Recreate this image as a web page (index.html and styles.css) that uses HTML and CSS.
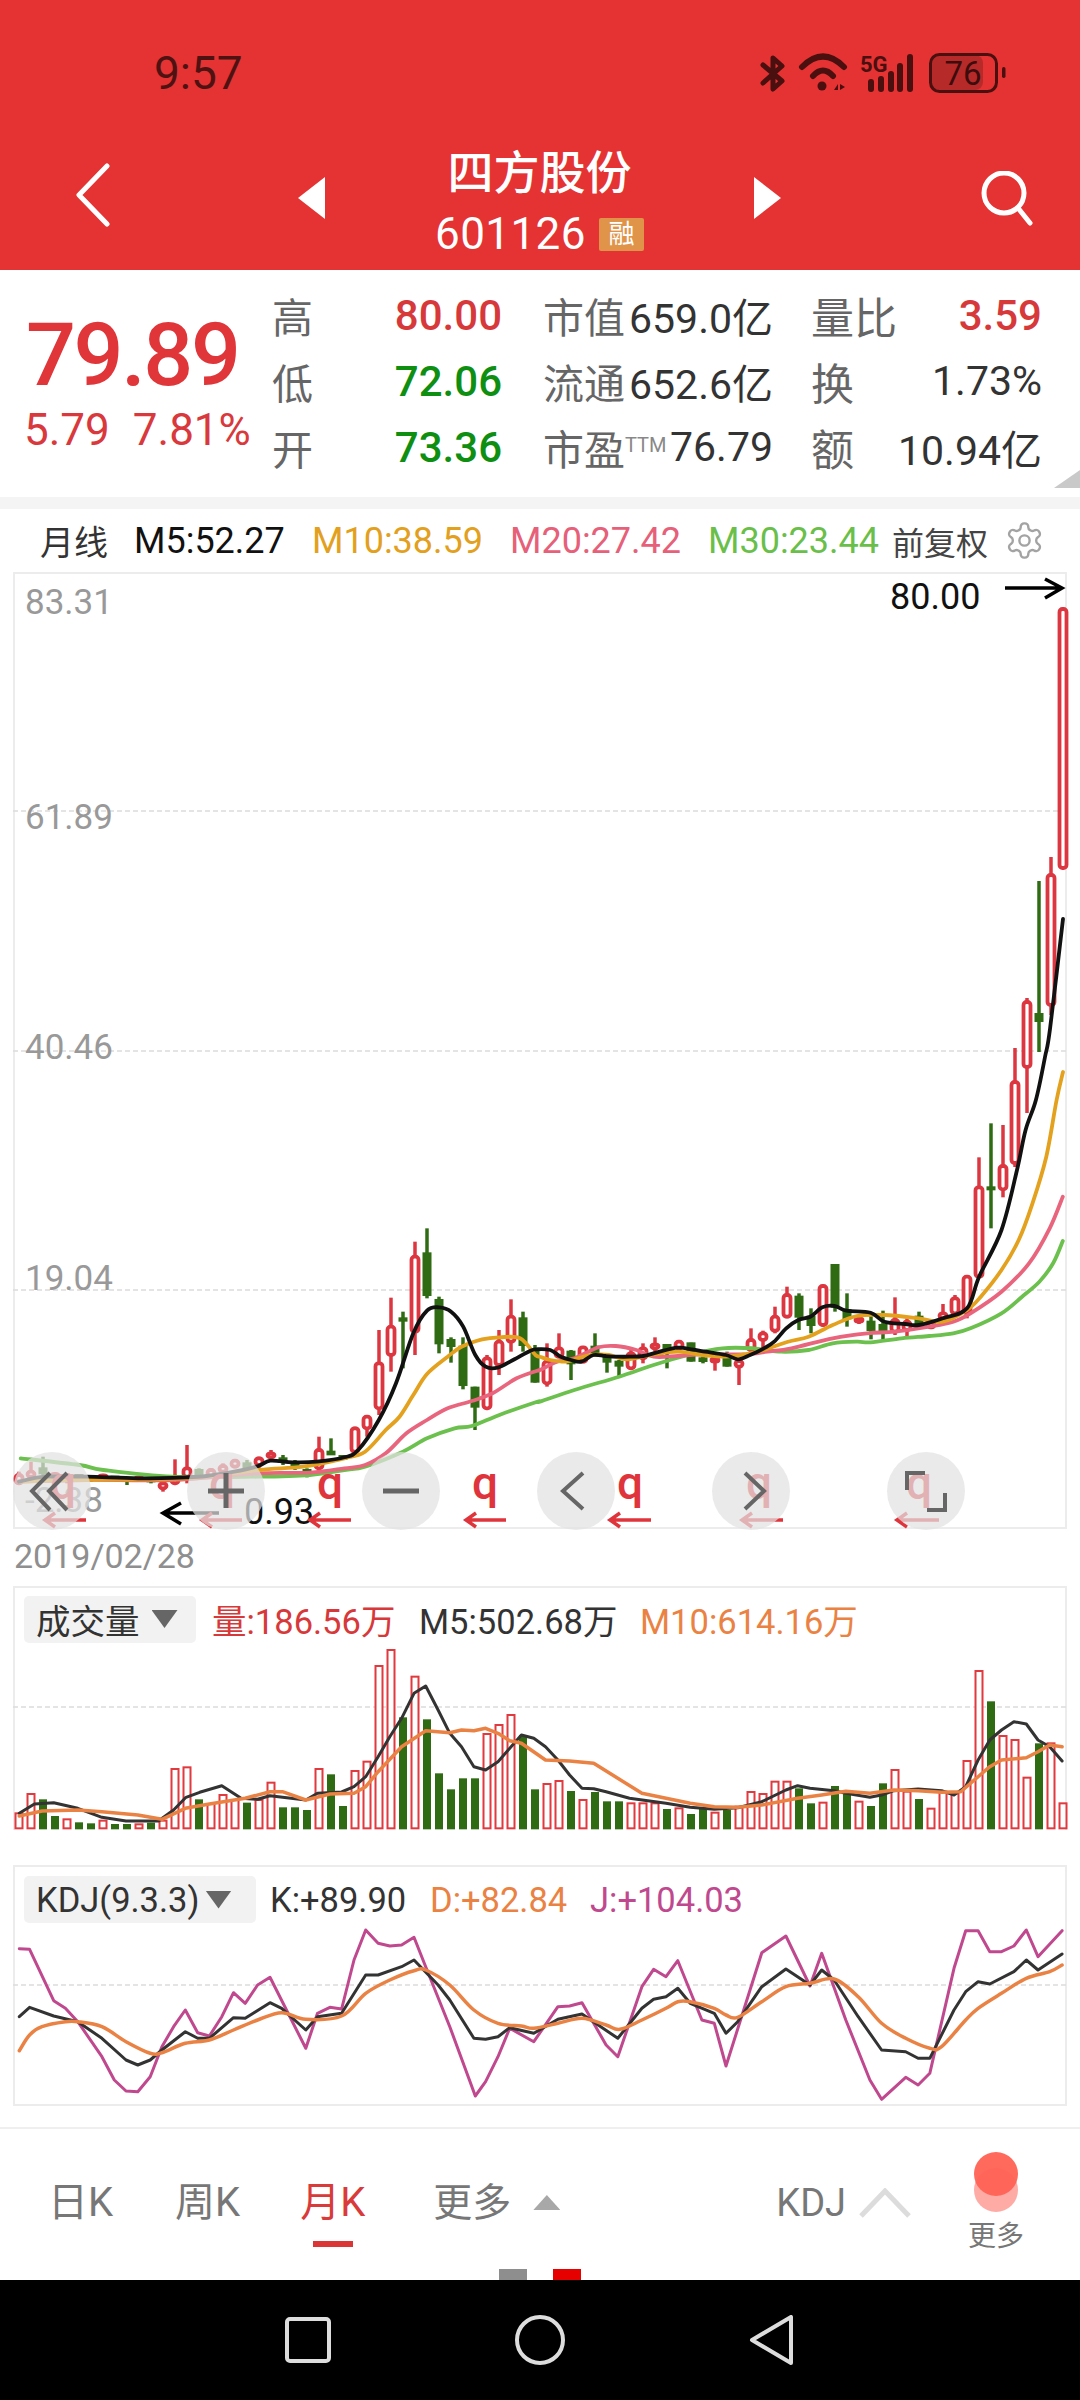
FILE: index.html
```html
<!DOCTYPE html>
<html lang="zh">
<head>
<meta charset="utf-8">
<title>四方股份 601126</title>
<link rel="stylesheet" href="styles.css">
</head>
<body>
<div class="app">
  <header class="topbar">
    <div class="status">
      <span class="time">9:57</span>
      <svg class="status-icons" viewBox="755 50 255 46" width="255" height="46">
        <path class="si-line" d="M763 65 L782 81 L773 89 V58 L782 66 L763 83"/>
        <path class="si-wifi" d="M802 67 Q823 46 844 67 M813 76 Q823 65 833 76"/>
        <circle class="si-fill" cx="822" cy="86" r="4.5"/>
        <path class="si-fill" d="M834 90l4-6v6zM840 84l5 3-5 3z"/>
        <text class="si-5g" x="860" y="72">5G</text>
        <path class="si-bars" d="M871 82v7M881 79v10M891 74v15M900 66v23M910 57v32"/>
        <rect class="si-batfill" x="931" y="55" width="52" height="35" rx="8"/>
        <rect class="si-bat" x="930.5" y="54.5" width="66" height="37" rx="9"/>
        <rect class="si-fill" x="1002" y="67" width="3.5" height="11" rx="1.7"/>
        <text class="si-76" x="963" y="85">76</text>
      </svg>
    </div>
    <nav class="navrow">
      <svg class="ic-back" viewBox="0 0 36 64" width="36" height="64"><path d="M32 3 L4 32 L32 61"/></svg>
      <svg class="ic-prev" viewBox="0 0 27 42" width="27" height="42"><path d="M27 0V42L0 21Z"/></svg>
      <div class="title">
        <div class="title-name">四方股份</div>
        <div class="title-code">601126<span class="badge">融</span></div>
      </div>
      <svg class="ic-next" viewBox="0 0 27 42" width="27" height="42"><path d="M0 0V42L27 21Z"/></svg>
      <svg class="ic-search" viewBox="0 0 54 56" width="54" height="56"><circle cx="25" cy="22" r="20"/><path d="M39 37 L51 52"/></svg>
    </nav>
  </header>

  <section class="stats">
    <div class="price">
      <div class="price-main">79.89</div>
      <div class="price-sub"><span>5.79</span><span>7.81%</span></div>
    </div>
    <div class="cell"><span class="lab">高</span><span class="val up">80.00</span></div>
    <div class="cell cell-b"><span class="lab">市值</span><span class="val">659.0亿</span></div>
    <div class="cell cell-c"><span class="lab">量比</span><span class="val up">3.59</span></div>
    <div class="cell"><span class="lab">低</span><span class="val down">72.06</span></div>
    <div class="cell cell-b"><span class="lab">流通</span><span class="val">652.6亿</span></div>
    <div class="cell cell-c"><span class="lab">换</span><span class="val">1.73%</span></div>
    <div class="cell"><span class="lab">开</span><span class="val down">73.36</span></div>
    <div class="cell cell-b"><span class="lab">市盈<sup class="ttm">TTM</sup></span><span class="val">76.79</span></div>
    <div class="cell cell-c"><span class="lab">额</span><span class="val">10.94亿</span></div>
    <span class="corner"></span>
  </section>
  <div class="strip"></div>

  <div class="legend">
    <span class="lg-title">月线</span>
    <span class="lg-m5">M5:52.27</span>
    <span class="lg-m10">M10:38.59</span>
    <span class="lg-m20">M20:27.42</span>
    <span class="lg-m30">M30:23.44</span>
    <span class="lg-adj">前复权</span>
    <svg class="gear" viewBox="0 0 24 24" width="41" height="41"><path d="M12.22 2h-.44a2 2 0 0 0-2 2v.18a2 2 0 0 1-1 1.73l-.43.25a2 2 0 0 1-2 0l-.15-.08a2 2 0 0 0-2.73.73l-.22.38a2 2 0 0 0 .73 2.73l.15.1a2 2 0 0 1 1 1.72v.51a2 2 0 0 1-1 1.74l-.15.09a2 2 0 0 0-.73 2.73l.22.38a2 2 0 0 0 2.73.73l.15-.08a2 2 0 0 1 2 0l.43.25a2 2 0 0 1 1 1.73V20a2 2 0 0 0 2 2h.44a2 2 0 0 0 2-2v-.18a2 2 0 0 1 1-1.73l.43-.25a2 2 0 0 1 2 0l.15.08a2 2 0 0 0 2.73-.73l.22-.39a2 2 0 0 0-.73-2.73l-.15-.08a2 2 0 0 1-1-1.74v-.5a2 2 0 0 1 1-1.74l.15-.09a2 2 0 0 0 .73-2.73l-.22-.38a2 2 0 0 0-2.73-.73l-.15.08a2 2 0 0 1-2 0l-.43-.25a2 2 0 0 1-1-1.73V4a2 2 0 0 0-2-2z"/><circle cx="12" cy="12" r="3"/></svg>
  </div>

  <div class="pane pane-main">
    <svg class="plot" viewBox="13 572 1054 957">
      <path class="grid" d="M13 811H1067M13 1051H1067M13 1290H1067"/>
      <text class="axis" x="25" y="614">83.31</text>
      <text class="axis" x="25" y="829">61.89</text>
      <text class="axis" x="25" y="1059">40.46</text>
      <text class="axis" x="25" y="1290">19.04</text>
      <text class="axis" x="25" y="1512">-2.38</text>
      <text class="mark" x="890" y="609">80.00</text>
      <path class="mark-arrow" d="M1005 588H1062M1045 579L1062 588L1045 598"/>
      <g id="candles"></g>
      <g id="mas"></g>
      <text class="mark" x="244" y="1524">0.93</text>
      <path class="mark-arrow" d="M219 1513H163M181 1503L163 1513L181 1524"/>
      <text class="q" x="63" y="1499">q</text>
      <text class="q" x="222" y="1499">q</text>
      <text class="q" x="330" y="1499">q</text>
      <text class="q" x="485" y="1499">q</text>
      <text class="q" x="630" y="1499">q</text>
      <text class="q" x="759" y="1499">q</text>
      <text class="q" x="919" y="1499">q</text>
      <path class="q-arrow" d="M45 1520H86M55 1513L45 1520L55 1527M202 1520H242M212 1513L202 1520L212 1527M310 1520H351M320 1513L310 1520L320 1527M466 1520H506M476 1513L466 1520L476 1527M610 1520H651M620 1513L610 1520L620 1527M742 1520H783M752 1513L742 1520L752 1527M897 1520H939M907 1513L897 1520L907 1527"/>
      <circle class="fab" cx="52" cy="1491" r="39"/>
      <circle class="fab" cx="226" cy="1491" r="39"/>
      <circle class="fab" cx="401" cy="1491" r="39"/>
      <circle class="fab" cx="576" cy="1491" r="39"/>
      <circle class="fab" cx="751" cy="1491" r="39"/>
      <circle class="fab" cx="926" cy="1491" r="39"/>
      <path class="fab-ic" d="M50 1473L32 1491L50 1510M67 1473L49 1491L67 1510"/>
      <path class="fab-ic thick" d="M208 1491H244M226 1473V1508"/>
      <path class="fab-ic thick" d="M383 1491H419"/>
      <path class="fab-ic" d="M583 1473L563 1491L583 1509"/>
      <path class="fab-ic" d="M745 1473L764 1491L745 1509"/>
      <path class="fab-ic" d="M907 1490V1473H925M945 1493V1510H927"/>
    </svg>
  </div>
  <div class="date">2019/02/28</div>

  <div class="pane pane-vol">
    <svg class="plot" viewBox="13 1586 1054 244">
      <path class="grid" d="M13 1707H1067"/>
      <g id="vols"></g>
      <g id="vol-lines"></g>
    </svg>
    <div class="pane-head">
      <div class="pill pill-vol"><span>成交量</span><i class="pill-tri"></i></div>
      <span class="hd-red">量:186.56万</span>
      <span class="hd-dark">M5:502.68万</span>
      <span class="hd-orange">M10:614.16万</span>
    </div>
  </div>

  <div class="pane pane-kdj">
    <svg class="plot" viewBox="13 1865 1054 241">
      <path class="grid" d="M13 1985H1067"/>
      <g id="kdj-lines"></g>
    </svg>
    <div class="pane-head">
      <div class="pill pill-kdj"><span>KDJ(9.3.3)</span><i class="pill-tri"></i></div>
      <span class="hd-dark">K:+89.90</span>
      <span class="hd-orange">D:+82.84</span>
      <span class="hd-magenta">J:+104.03</span>
    </div>
  </div>

  <div class="tabs">
    <span class="tab tab-d">日K</span>
    <span class="tab tab-w">周K</span>
    <span class="tab tab-m active">月K</span>
    <span class="tab tab-more">更多</span>
    <i class="tab-tri"></i>
    <span class="tab tab-kdj">KDJ</span>
    <svg class="tab-chev" viewBox="0 0 52 30" width="52" height="30"><path d="M2 28L26 3L50 28"/></svg>
    <div class="orb">
      <span class="orb-dots"></span>
      <span class="orb-label">更多</span>
    </div>
    <span class="page-dots"><i class="pd-gray"></i><i class="pd-red"></i></span>
  </div>

  <footer class="sysnav">
    <svg viewBox="0 0 46 46" width="46" height="46"><rect class="nav-ic" x="2" y="2" width="42" height="42" rx="3"/></svg>
    <svg viewBox="0 0 50 50" width="50" height="50"><circle class="nav-ic" cx="25" cy="25" r="23"/></svg>
    <svg viewBox="0 0 44 50" width="44" height="50"><path class="nav-ic" d="M42 2V48L3 25Z"/></svg>
  </footer>
</div>
<script src="script.js"></script>
</body>
</html>
```
FILE: styles.css
```css
* { box-sizing: border-box; }
html, body { margin: 0; padding: 0; background: #fff; }
body { font-family: Roboto, "Noto Sans CJK SC", sans-serif; }
.app { width: 1080px; height: 2400px; overflow: hidden; display: flex; flex-direction: column; background: #fff; }

/* top bar */
.topbar { height: 270px; background: #e53232; display: flex; flex-direction: column; }
.status { height: 146px; display: flex; align-items: center; justify-content: space-between; padding: 0 70px 0 154px; }
.time { font-size: 46px; color: #4f1212; line-height: 1; }
.si-line { fill: none; stroke: #4a0f0f; stroke-width: 5; stroke-linejoin: round; stroke-linecap: round; }
.si-wifi { fill: none; stroke: #4a0f0f; stroke-width: 6; stroke-linecap: round; }
.si-fill { fill: #4a0f0f; }
.si-bars { fill: none; stroke: #4a0f0f; stroke-width: 6; stroke-linecap: round; }
.si-5g { font: 700 22px Roboto, sans-serif; fill: #4a0f0f; }
.si-bat { fill: none; stroke: #4a0f0f; stroke-width: 3; }
.si-batfill { fill: #b72a2a; }
.si-76 { font: 400 33px Roboto, sans-serif; fill: #3d0c0c; text-anchor: middle; }

.navrow { flex: 1; display: flex; align-items: flex-start; padding-left: 75px; }
.ic-back { margin-top: 17px; fill: none; stroke: #fff; stroke-width: 5; stroke-linecap: round; stroke-linejoin: round; }
.ic-prev { margin: 31px 0 0 187px; fill: #fff; }
.ic-next { margin-top: 31px; fill: #fff; }
.title { width: 429px; padding-top: 1px; display: flex; flex-direction: column; align-items: center; color: #fff; }
.title-name { font-size: 46px; line-height: 52px; font-weight: 500; }
.title-code { display: flex; align-items: center; gap: 13px; margin-top: 13px; font-size: 44px; line-height: 44px; letter-spacing: .4px; }
.badge { width: 45px; height: 33px; background: #e0944a; border-radius: 2px; font-size: 26px; line-height: 33px; text-align: center; letter-spacing: 0; }
.ic-search { margin: 25px 0 0 198px; fill: none; stroke: #fff; stroke-width: 5; stroke-linecap: round; }

/* quote */
.stats { position: relative; height: 227px; padding-top: 12px; display: grid; grid-template-columns: 272px 230px 271px 269px; grid-auto-rows: 66px; }
.cell-b { padding-left: 41px; }
.cell-c { padding-left: 38px; }
.price { grid-row: 1 / span 3; padding: 26px 0 0 24px; }
.price-main { font-size: 88px; line-height: 90px; font-weight: 500; color: #e03539; letter-spacing: -2.4px; margin-left: 2px; margin-top: 2px; }
.price-sub { display: flex; gap: 23px; font-size: 44px; line-height: 44px; color: #d9393c; margin-top: 8px; }
.cell { display: flex; justify-content: space-between; align-items: center; }
.lab { font-size: 41px; color: #666; white-space: nowrap; }
.cell-c .lab { font-size: 43px; }
.val { font-size: 41px; color: #333; white-space: nowrap; }
.val.up, .val.down { font-size: 42px; font-weight: 500; }
.val.up { color: #d7393b; }
.val.down { color: #0e8f12; }
.ttm { font-size: 20px; vertical-align: 13px; line-height: 0; color: #888; }
.corner { position: absolute; right: 0; bottom: 9px; width: 26px; height: 18px; background: #c9c9c9; clip-path: polygon(100% 0, 100% 100%, 0 100%); }
.strip { height: 12px; background: #f4f4f4; }

/* legend */
.legend { height: 63px; display: grid; grid-template-columns: 94px 178px 198px 198px 184px 112px 41px; align-items: center; padding-left: 40px; font-size: 36px; white-space: nowrap; }
.lg-title { font-size: 34px; color: #333; }
.lg-m5 { color: #111; }
.lg-m10 { color: #e2a01e; }
.lg-m20 { color: #e6607a; }
.lg-m30 { color: #6abf4b; }
.lg-adj { font-size: 32px; color: #444; }
.gear { fill: none; stroke: #a3a3a3; stroke-width: 1.4; }

/* charts */
.pane { position: relative; margin: 0 13px; width: 1054px; border: 2px solid #ececec; }
.pane-main { height: 957px; }
.pane-vol { height: 244px; border-bottom: 0; }
.pane-kdj { height: 241px; margin-top: 35px; }
.plot { position: absolute; left: -2px; top: -2px; width: 1054px; overflow: visible; }
.pane-main .plot { height: 957px; }
.pane-vol .plot { height: 244px; }
.pane-kdj .plot { height: 241px; }
.grid { fill: none; stroke: #dcdcdc; stroke-width: 1.5; stroke-dasharray: 5 3; }
.axis { font: 400 35px Roboto, sans-serif; fill: #999; }
.mark { font: 400 36px Roboto, sans-serif; fill: #111; }
.mark-arrow { fill: none; stroke: #000; stroke-width: 3.5; }
.q { font: 500 46px Roboto, sans-serif; fill: #e0343c; text-anchor: middle; }
.q-arrow { fill: none; stroke: #e0343c; stroke-width: 3.5; }
.fab { fill: rgba(226,226,226,.72); }
.fab-ic { fill: none; stroke: #666; stroke-width: 4; }
.fab-ic.thick { stroke-width: 5; }
.date { height: 57px; line-height: 54px; padding-left: 14px; font-size: 34px; color: #8f8f8f; }

.wick-r { stroke: #dc3640; stroke-width: 3.5; }
.wick-g { stroke: #2f6b12; stroke-width: 3.5; }
.body-r { fill: #fff; stroke: #dc3640; stroke-width: 3.8; }
.body-g { fill: #2f6b12; stroke: #2f6b12; stroke-width: 2; }
.line { fill: none; stroke-linejoin: round; stroke-linecap: round; }
.ma5 { stroke: #111; stroke-width: 3.8; }
.ma10 { stroke: #e3a11d; stroke-width: 3.8; }
.ma20 { stroke: #e8657d; stroke-width: 3.8; }
.ma30 { stroke: #6cc04e; stroke-width: 3.8; }
.vbar-r { fill: #fff; stroke: #e0393e; stroke-width: 2; }
.vbar-g { fill: #2f6b12; }
.v5 { stroke: #333; stroke-width: 3; }
.v10 { stroke: #ea8244; stroke-width: 3.5; }
.kk { stroke: #333; stroke-width: 3; }
.kd { stroke: #ea8244; stroke-width: 3.5; }
.kj { stroke: #c0488e; stroke-width: 3; }

.pane-head { position: relative; display: flex; align-items: center; padding: 8px 0 0 9px; font-size: 34.5px; white-space: nowrap; }
.pane-vol .pane-head { padding-top: 6px; }
.pane-kdj .pane-head { padding-top: 9px; }
.pill { height: 47px; display: flex; align-items: center; background: #f2f2f2; border-radius: 5px; padding-left: 12px; color: #333; }
.pill-vol { width: 172px; gap: 12px; margin-right: 16px; }
.pill-kdj { width: 232px; gap: 6px; margin-right: 14px; }
.pill-tri { width: 26px; height: 18px; background: #666; clip-path: polygon(0 0, 100% 0, 50% 100%); }
.pane-vol .hd-red { width: 207px; }
.pane-vol .hd-dark { width: 221px; }
.pane-kdj .hd-dark { width: 160px; }
.pane-kdj .hd-orange { width: 160px; }
.hd-red { color: #d7393b; }
.hd-dark { color: #333; }
.hd-orange { color: #ea8244; }
.hd-magenta { color: #c0488e; }

/* tabs */
.tabs { position: relative; height: 153px; margin-top: 21px; border-top: 2px solid #efefef; display: flex; align-items: flex-start; padding: 48px 0 0 48px; }
.tab { font-size: 40px; line-height: 52px; color: #777; white-space: nowrap; }
.tab-w { margin-left: 62px; }
.tab-m { margin-left: 60px; color: #d93a3a; position: relative; }
.tab-m::after { content: ""; position: absolute; left: 13px; top: 64px; width: 40px; height: 6px; background: #db3535; }
.tab-more { margin-left: 68px; font-size: 39px; }
.tab-tri { margin: 18px 0 0 22px; width: 27px; height: 15px; background: #a8a8a8; clip-path: polygon(50% 0, 100% 100%, 0 100%); }
.tab-kdj { margin-left: 216px; font-size: 38px; }
.tab-chev { margin: 11px 0 0 13px; fill: none; stroke: #dcdcdc; stroke-width: 5; }
.orb { position: absolute; left: 960px; top: 23px; width: 72px; display: flex; flex-direction: column; align-items: center; }
.orb-dots { position: relative; width: 44px; height: 60px; }
.orb-dots::before, .orb-dots::after { content: ""; position: absolute; left: 0; width: 44px; height: 44px; border-radius: 50%; }
.orb-dots::after { top: 0; background: rgba(255,98,84,.95); }
.orb-dots::before { top: 16px; background: #ffaba5; }
.orb-label { font-size: 28px; line-height: 34px; color: #777; margin-top: 8px; }
.page-dots { position: absolute; left: 499px; bottom: 0; display: flex; gap: 26px; }
.page-dots i { display: block; width: 28px; height: 11px; }
.pd-gray { background: #8e8e8e; }
.pd-red { background: #e60000; }

/* system nav */
.sysnav { height: 120px; background: #000; display: flex; align-items: center; justify-content: center; gap: 184px; padding-right: 3px; }
.nav-ic { fill: none; stroke: #ddd; stroke-width: 4; stroke-linejoin: round; }
```
FILE: script.js
```js
// Reference-sampled chart data. X runs on a 12px slot grid; Y values are sampled
// in 3x units from a base line, so each block says which base it belongs to.
var NS = 'http://www.w3.org/2000/svg';
function el(parent, tag, cls, attrs) {
  var n = document.createElementNS(NS, tag);
  n.setAttribute('class', cls);
  for (var k in attrs) n.setAttribute(k, attrs[k]);
  parent.appendChild(n);
  return n;
}
function slot(i) { return 19 + 12 * i; }

// [colour, wickTop, wickBottom, bodyTop, bodyBottom]
var c1 = 'r755,795,765,790 r725,775,755,770 g710,765,745,760 r760,785,762,772 r760,790,765,780 g762,778,765,775 g765,785,768,775 r763,775,766,772 g768,780,770,776 g772,795,775,782 r770,782,772,778 g772,790,776,784 r785,815,790,805 r718,790,770,790 r675,790,745,770 g745,770,750,765 r745,770,750,768 r730,760,738,755 r718,745,722,740 g720,750,730,745 r710,750,715,735 r690,715,700,712 g705,735,715,725 g720,750,735,742 g745,772,750,760 r650,750,690,745 g655,705,695,703 g705,720,708,716 r620,700,625,695 r585,650,590,625 r330,585,430,565 r233,455,320,405 g275,445,295,302 r65,405,110,335 g25,235,100,225 g230,400,240,370 g352,428,360,378 g352,508,380,495 g500,630,503,560 r405,568,415,565 r330,465,365,435 r238,395,290,365 g275,395,295,375 g375,488,395,485';
var c2 = 'r730,860,785,850 r700,775,745,770 g750,840,755,790 r740,790,742,785 g700,770,740,765 g770,818,770,785 g780,830,785,797 r750,805,760,805 r730,790,745,775 r712,755,733,745 g733,805,735,755 r722,755,725,745 g728,785,730,782 g770,790,775,783 r770,812,775,785 g755,800,775,797 r780,855,783,800 r685,760,720,750 r692,750,700,720 r620,700,650,692 r560,655,585,650 g580,690,590,650 g625,700,650,675 r555,680,558,675 g495,635,495,620 g580,680,630,655 r645,672,655,665 g640,718,665,690 g632,718,675,690 r592,705,660,695 r655,715,665,690 g635,680,650,670 r665,685,668,682 r612,655,640,655 r585,645,595,640 r525,655,530,640 r172,530,262,530 g70,385,262,268 r75,292,198,268';
var c3 = [['r',1048,1167,1082,1163],['r',998,1113,1002,1067],['g',881,1052,1014,1021],['r',857,1015,875,1005],['r',609,868,609,868]];

function parseC(s, base) {
  return s.split(' ').map(function (t) {
    var v = t.slice(1).split(',').map(function (x) { return base + Number(x) / 3; });
    return [t[0], v[0], v[1], v[2], v[3]];
  });
}
var candles = parseC(c1, 1220).concat(parseC(c2, 1100), c3);
var gc = document.getElementById('candles');
candles.forEach(function (c, i) {
  var x = slot(i);
  el(gc, 'line', 'wick-' + c[0], { x1: x, x2: x, y1: c[1], y2: c[2] });
  el(gc, 'rect', 'body-' + c[0], {
    x: x - 3.5, y: c[3], width: 7, height: Math.max(c[4] - c[3], 2), rx: c[0] === 'r' ? 3 : 0
  });
});

function path(pts, smooth) {
  var d = 'M' + pts[0][0].toFixed(1) + ' ' + pts[0][1].toFixed(1);
  for (var i = 1; i < pts.length; i++) {
    if (!smooth) { d += 'L' + pts[i][0].toFixed(1) + ' ' + pts[i][1].toFixed(1); continue; }
    var p0 = pts[Math.max(i - 2, 0)], p1 = pts[i - 1], p2 = pts[i], p3 = pts[Math.min(i + 1, pts.length - 1)];
    d += 'C' + (p1[0] + (p2[0] - p0[0]) / 6).toFixed(1) + ' ' + (p1[1] + (p2[1] - p0[1]) / 6).toFixed(1) + ' ' +
      (p2[0] - (p3[0] - p1[0]) / 6).toFixed(1) + ' ' + (p2[1] - (p3[1] - p1[1]) / 6).toFixed(1) + ' ' +
      p2[0].toFixed(1) + ' ' + p2[1].toFixed(1);
  }
  return d;
}
function nums(s) { return s.trim().split(/\s+/).map(function (t) { return t.split(',').map(Number); }); }
// a = samples on base 1220, b = samples on base 1100 (x offset 540), c = page coordinates
function mainLine(a, b, c) {
  var k = 1568 / 540;
  return nums(a).map(function (p) { return [p[0] / k, 1220 + p[1] / 3]; })
    .concat(nums(b).map(function (p) { return [540 + p[0] / k, 1100 + p[1] / 3]; }))
    .concat(c ? nums(c) : []);
}
var gm = document.getElementById('mas');
el(gm, 'path', 'line ma30', { d: path(mainLine(
  '60,715 230,735 300,750 500,770 750,770 900,765 1000,750 1060,740 1170,695 1240,655 1320,625 1370,618 1450,585 1560,545',
  '0,905 100,870 230,830 330,795 430,765 530,745 620,745 700,755 780,750 850,730 920,725 960,727 1050,715 1130,708 1200,700 1250,685 1340,640 1400,590 1450,545 1490,490 1518,423'), true) });
el(gm, 'path', 'line ma20', { d: path(mainLine(
  '55,785 250,780 500,780 750,760 900,758 1000,745 1060,735 1120,700 1180,640 1240,600 1300,565 1370,543 1430,520 1500,475 1560,452',
  '0,810 50,785 100,775 170,742 220,738 280,750 330,770 400,768 470,763 530,763 600,763 660,755 730,745 850,715 950,700 1030,695 1130,680 1200,665 1250,640 1340,575 1420,490 1480,385 1518,290'), true) });
el(gm, 'path', 'line ma10', { d: path(mainLine(
  '55,785 200,780 540,775 750,750 880,740 1000,715 1060,695 1120,630 1160,590 1200,525 1240,462 1300,410 1340,380 1400,358 1450,352 1510,355 1555,405',
  '0,770 30,780 75,785 110,775 150,765 200,765 250,778 320,765 400,755 470,765 540,770 600,762 650,750 720,725 780,710 850,675 920,648 1000,645 1100,655 1170,665 1240,630 1280,590 1340,510 1390,420 1430,310 1470,170 1500,0',
  '1063,1072'), true) });
el(gm, 'path', 'line ma5', { d: path(mainLine(
  '55,785 130,770 250,770 400,775 540,772 600,768 680,755 750,738 785,722 850,727 920,725 1000,712 1040,690 1100,600 1150,490 1200,340 1240,272 1275,262 1310,275 1345,320 1380,405 1410,440 1445,443 1490,420 1540,392',
  '-10,748 30,750 60,770 90,780 120,785 155,765 190,768 225,770 260,770 300,768 340,757 400,743 440,748 480,755 540,765 575,778 610,765 650,745 680,725 715,685 750,660 785,650 820,622 855,618 890,632 960,638 1000,665 1060,672 1100,675 1170,655 1240,625 1275,530 1340,390 1385,210 1410,90 1440,0',
  '1045,1057 1050,1029 1063,919'), true) });

// volume: bar tops sampled in 3x from y=1580
var k4 = 1568 / 1080;
var vols = 'r700 r642 g658 g708 r718 g727 g730 r722 g732 g732 r733 g728 r722 r567 r562 g658 r672 r645 r660 g668 r660 r608 g682 g682 g690 r567 g583 g678 r573 r545 r258 r210 g412 r290 g418 g580 g628 g595 g595 r462 r435 r405 g465 g628 r612 r603 g633 r660 g636 g664 g664 r670 r670 r670 g687 r685 g702 g685 r698 g690 r680 r636 r642 r605 r605 g625 g670 r668 g618 g640 r665 g678 g610 r570 r635 g657 r686 r635 r640 r543 r273 g364 r468 r480 r593 g490 r490 r670';
var gv = document.getElementById('vols');
var volBase = 1580 + 745 / 3;
vols.split(' ').forEach(function (t, i) {
  var top = 1580 + Number(t.slice(1)) / 3, x = slot(i);
  el(gv, 'rect', 'vbar-' + t[0], t[0] === 'r'
    ? { x: x - 3.5, y: top, width: 7, height: volBase - top }
    : { x: x - 4, y: top, width: 8, height: volBase - top + 1 });
});
function paneLine(s) { return nums(s).map(function (p) { return [p[0] / k4, 1580 + p[1] / 3]; }); }
var gl = document.getElementById('vol-lines');
el(gl, 'path', 'line v5', { d: path(paneLine('28,700 50,672 78,668 113,685 148,712 183,723 230,723 252,690 270,652 290,637 322,617 350,655 374,658 392,647 444,660 461,640 496,636 514,620 531,590 549,530 566,470 583,415 601,340 618,318 636,390 653,460 670,500 688,560 705,570 723,545 757,465 775,475 792,500 810,540 827,585 845,625 862,626 880,635 914,655 967,670 1002,682 1037,688 1071,683 1106,665 1141,630 1158,617 1176,625 1211,632 1228,640 1263,652 1280,645 1298,632 1333,627 1367,632 1385,645 1402,620 1420,540 1437,480 1454,450 1472,425 1490,432 1507,480 1524,500 1542,543')) });
el(gl, 'path', 'line v10', { d: path(paneLine('28,708 61,693 113,690 148,695 200,705 235,718 269,685 304,672 356,655 392,635 410,635 444,660 479,642 514,640 531,620 549,575 583,500 618,452 653,458 670,450 688,452 705,445 723,460 740,482 757,490 792,540 827,543 862,550 897,595 932,640 967,655 1002,670 1037,680 1071,682 1106,675 1158,655 1193,645 1228,634 1263,640 1298,630 1333,632 1367,637 1395,635 1420,590 1437,560 1454,540 1490,533 1507,515 1524,495 1542,500')) });

var gk = document.getElementById('kdj-lines');
el(gk, 'path', 'line kj', { d: path(paneLine('28,1106 43,1108 78,1262 95,1285 113,1325 148,1430 166,1500 183,1533 200,1535 218,1490 235,1400 252,1340 269,1290 287,1358 304,1368 322,1310 339,1238 356,1270 374,1215 392,1192 444,1405 461,1300 479,1282 496,1287 514,1140 531,1050 549,1090 566,1098 583,1095 601,1072 618,1160 653,1340 690,1548 705,1505 723,1430 740,1345 775,1385 810,1280 827,1278 845,1268 880,1395 897,1430 932,1220 949,1168 967,1190 984,1142 1019,1320 1037,1330 1054,1458 1106,1118 1141,1068 1176,1218 1193,1120 1228,1320 1263,1500 1280,1558 1315,1492 1333,1515 1350,1480 1385,1165 1402,1052 1420,1052 1437,1115 1454,1115 1472,1098 1490,1050 1507,1130 1542,1052')) });
el(gk, 'path', 'line kk', { d: path(paneLine('28,1310 43,1282 78,1308 113,1325 148,1375 183,1440 200,1455 218,1440 235,1410 269,1355 287,1375 304,1375 339,1313 356,1315 392,1268 409,1285 444,1350 461,1310 496,1300 531,1185 549,1185 583,1160 601,1140 636,1215 653,1260 688,1375 705,1378 723,1370 740,1343 775,1360 810,1318 845,1302 897,1375 932,1285 949,1258 967,1250 984,1225 1002,1270 1037,1300 1054,1360 1071,1325 1106,1220 1141,1167 1176,1215 1193,1170 1211,1200 1246,1310 1280,1410 1315,1415 1333,1435 1350,1435 1385,1290 1402,1235 1420,1205 1437,1212 1472,1175 1490,1140 1507,1170 1542,1122')) });
el(gk, 'path', 'line kd', { d: path(paneLine('28,1412 43,1365 61,1340 95,1325 113,1325 148,1340 183,1385 218,1420 235,1418 269,1390 304,1380 339,1350 374,1320 409,1298 444,1318 496,1308 531,1240 566,1200 601,1172 618,1170 653,1215 688,1290 723,1330 757,1338 775,1345 810,1330 845,1315 880,1335 900,1348 932,1320 967,1285 984,1265 1002,1265 1037,1285 1054,1305 1071,1312 1106,1265 1141,1220 1176,1210 1211,1197 1246,1250 1280,1330 1315,1375 1350,1405 1367,1400 1402,1320 1420,1285 1454,1240 1490,1195 1524,1175 1542,1155'), true) });
```
